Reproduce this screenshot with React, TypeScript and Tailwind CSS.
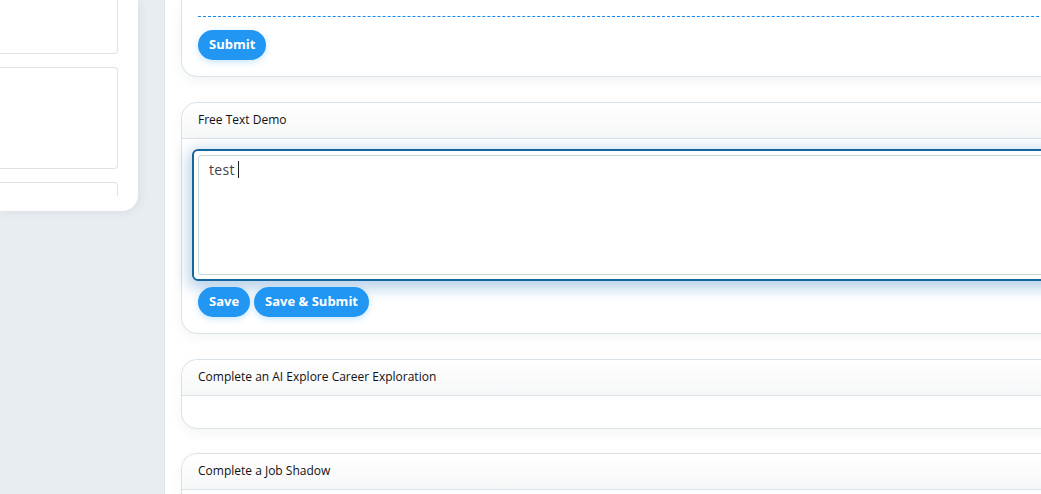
import React from "react";

const font = { fontFamily: '"Open Sans", "Noto Sans", Arial, sans-serif' };

function SidePanel() {
  return (
    <div className="w-[165px] shrink-0 bg-[#e8edf1] border-r border-[#dde3e8]">
      <div className="w-[138px] bg-white rounded-br-[16px] pr-[20px] pb-[15px] shadow-[2px_2px_8px_rgba(60,80,100,0.08)]">
        <div className="h-[196px] overflow-hidden flex flex-col gap-[13px]">
          <div className="h-[54px] shrink-0 border border-t-0 border-l-0 border-[#dfe3e6] rounded-br-[4px]" />
          <div className="h-[102px] shrink-0 border border-l-0 border-[#dfe3e6] rounded-r-[4px]" />
          <div className="h-[40px] shrink-0 border border-l-0 border-[#dfe3e6] rounded-r-[4px]" />
        </div>
      </div>
    </div>
  );
}

function PillButton({ label }: { label: string }) {
  return (
    <button className="h-[30px] rounded-full bg-[#2196f3] px-[11px] text-[13px] font-bold text-white shadow-[0_2px_6px_rgba(33,150,243,0.25)]">
      {label}
    </button>
  );
}

function CardHeader({ title }: { title: string }) {
  return (
    <div className="h-[36px] flex items-center px-4 pb-[2px] border-b border-[#d8e2e8] bg-gradient-to-b from-white to-[#f6f7f8] rounded-tl-[16px]">
      <span className="text-[12px] font-medium text-[#111]">{title}</span>
    </div>
  );
}

function TaskCard({ title, bodyHeight }: { title: string; bodyHeight: string }) {
  return (
    <div className="w-[920px] shrink-0 border border-[#d8e2e8] rounded-l-[16px] bg-white shadow-[0_4px_12px_rgba(40,60,80,0.05)]">
      <CardHeader title={title} />
      <div className={bodyHeight} />
    </div>
  );
}

export default function App() {
  return (
    <div className="flex h-[494px] w-[1041px] overflow-hidden bg-white" style={font}>
      <SidePanel />
      <main className="flex-1 overflow-hidden pl-4 flex flex-col gap-[25px]">
        {/* upload block, scrolled partly out of view */}
        <div className="w-[920px] shrink-0 border border-t-0 border-[#d8e2e8] rounded-bl-[16px] bg-white px-4 pb-4 shadow-[0_4px_12px_rgba(40,60,80,0.06)]">
          <div className="h-[17px] border-b border-dashed border-[#1687ef]" />
          <div className="mt-[13px]">
            <PillButton label="Submit" />
          </div>
        </div>

        <div className="w-[920px] shrink-0 border border-[#d8e2e8] rounded-l-[16px] bg-white shadow-[0_4px_12px_rgba(40,60,80,0.05)]">
          <CardHeader title="Free Text Demo" />
          <div className="p-4">
            <div className="-m-[6px] rounded-[6px] border-2 border-[#14649e] p-[4px] shadow-[0_4px_14px_4px_rgba(40,120,190,0.32)]">
              <div className="h-[120px] rounded-[3px] border border-[#c9d3da] bg-white px-[10px] pt-[3px]">
                <div className="flex items-center text-[14px] tracking-[0.3px] text-[#444]">
                  <span>test</span>
                  <span className="ml-[3px] inline-block h-[17px] w-px bg-[#222]" />
                </div>
              </div>
            </div>
            <div className="mt-3 flex gap-1">
              <PillButton label="Save" />
              <PillButton label="Save & Submit" />
            </div>
          </div>
        </div>

        <TaskCard title="Complete an AI Explore Career Exploration" bodyHeight="h-[32px]" />
        <div className="-mt-px">
          <TaskCard title="Complete a Job Shadow" bodyHeight="h-[32px]" />
        </div>
      </main>
    </div>
  );
}
